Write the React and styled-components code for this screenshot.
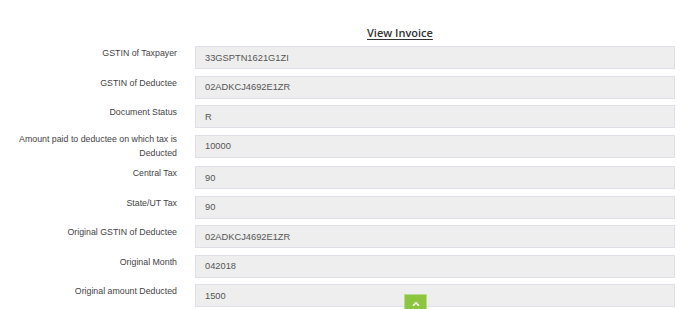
import React from 'react';
import styled, { createGlobalStyle } from 'styled-components';
import { ChevronUp } from 'lucide-react';

const GlobalStyle = createGlobalStyle`
  body {
    margin: 0;
    background: #ffffff;
    font-family: "Liberation Sans", Arial, sans-serif;
  }
`;

const Page = styled.div`
  width: 700px;
  height: 309px;
  overflow: hidden;
  padding-top: 25px;
  box-sizing: border-box;
`;

const Title = styled.div`
  padding-left: 367px;
  height: 16px;
  margin-bottom: 5px;
  font-family: "Open Sans", sans-serif;
  font-size: 11px;
  font-weight: 600;
  line-height: 16px;
  color: #333333;
  text-decoration: underline;
  text-underline-offset: 2px;
`;

const Form = styled.div`
  display: flex;
  flex-direction: column;
`;

const Row = styled.div`
  display: grid;
  grid-template-columns: 177px 480px;
  column-gap: 18px;
  margin-bottom: 6.5px;
`;

const Label = styled.div`
  text-align: right;
  font-size: 8.8px;
  line-height: 14px;
  color: #444444;
  margin-top: ${(props) => (props.multi ? '-3px' : '0')};
`;

const Value = styled.div`
  height: 23px;
  box-sizing: border-box;
  background: #eeeeee;
  border: 1px solid #dfdfe6;
  padding-left: 9px;
  display: flex;
  align-items: center;
  font-size: 9.3px;
  color: #555555;
`;

const ScrollTop = styled.button`
  position: fixed;
  left: 404px;
  top: 294px;
  width: 23px;
  height: 25px;
  padding: 0;
  border: 1px solid #b8dc8a;
  background: #8cc63f;
  display: flex;
  justify-content: center;
  align-items: flex-start;
  padding-top: 4px;
  box-sizing: border-box;
`;

const fields = [
  ['GSTIN of Taxpayer', '33GSPTN1621G1ZI'],
  ['GSTIN of Deductee', '02ADKCJ4692E1ZR'],
  ['Document Status', 'R'],
  ['Amount paid to deductee on which tax is Deducted', '10000', true],
  ['Central Tax', '90'],
  ['State/UT Tax', '90'],
  ['Original GSTIN of Deductee', '02ADKCJ4692E1ZR'],
  ['Original Month', '042018'],
  ['Original amount Deducted', '1500'],
];

const App = () => {
  return (
    <>
      <GlobalStyle />
      <Page>
        <Title>View Invoice</Title>
        <Form>
          {fields.map(([label, value, multi]) => (
            <Row key={label}>
              <Label multi={multi}>
                {multi ? (
                  <>
                    Amount paid to deductee on which tax is
                    <br />
                    Deducted
                  </>
                ) : (
                  label
                )}
              </Label>
              <Value>{value}</Value>
            </Row>
          ))}
        </Form>
      </Page>
      <ScrollTop>
        <ChevronUp size={10} color="#ffffff" strokeWidth={4} />
      </ScrollTop>
    </>
  );
};

export default App;
